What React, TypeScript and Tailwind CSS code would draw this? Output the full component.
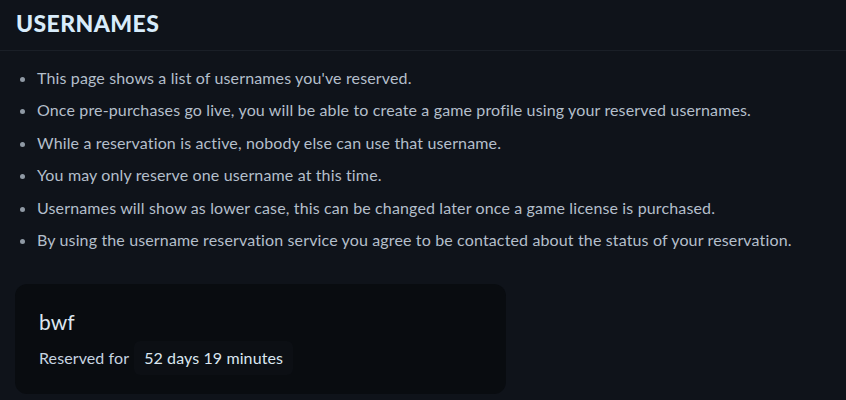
const notes = [
  "This page shows a list of usernames you've reserved.",
  'Once pre-purchases go live, you will be able to create a game profile using your reserved usernames.',
  'While a reservation is active, nobody else can use that username.',
  'You may only reserve one username at this time.',
  'Usernames will show as lower case, this can be changed later once a game license is purchased.',
  'By using the username reservation service you agree to be contacted about the status of your reservation.',
];

const App = () => {
  return (
    <div className="min-h-screen bg-[#0f131a] font-['Lato','Noto_Sans',sans-serif] text-[#b4bfcb]">
      <div className="border-b border-[#1a1f27] px-4 pt-[9px] pb-[13px]">
        <h1 className="text-[23px] font-black leading-[28px] tracking-[0.4px] text-[#d8ecfb]">USERNAMES</h1>
      </div>

      <ul className="mt-[11px] list-disc pl-[37px] marker:text-[#8f99a4]">
        {notes.map((note) => (
          <li key={note} className="text-[16px] leading-[32.4px] tracking-[0.14px]">
            {note}
          </li>
        ))}
      </ul>

      <div className="mx-[15px] mt-[28px] w-[491px] rounded-xl bg-[#090c10] px-6 pt-6 pb-[19px]">
        <p className="text-[21px] leading-7 text-[#dce6ef]">bwf</p>
        <div className="mt-[5px] flex items-center text-[16px] tracking-[0.1px]">
          <span className="text-[#c6d4e0]">Reserved for</span>
          <span className="ml-[5px] rounded-md bg-[#0c0f14] px-[10px] py-[5px] text-[#dbe7f1]">
            52 days 19 minutes
          </span>
        </div>
      </div>
    </div>
  );
};

export default App;
